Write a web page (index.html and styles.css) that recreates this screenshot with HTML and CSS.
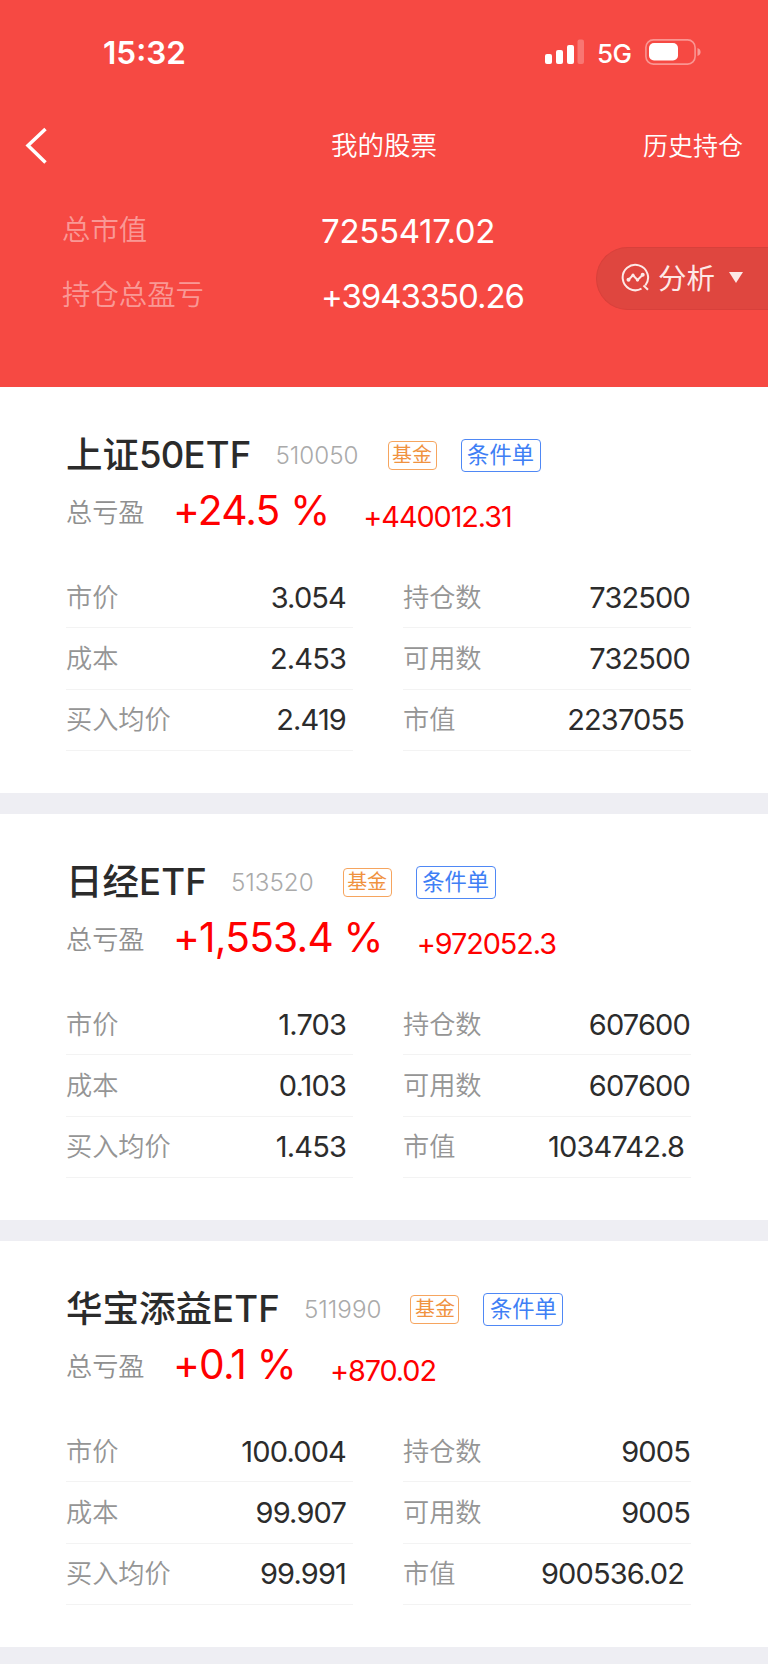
FILE: index.html
```html
<!DOCTYPE html>
<html lang="zh-CN">
	<head>
		<meta charset="UTF-8">
		<title>我的股票</title>
		<link rel="stylesheet" href="styles.css">
	</head>
	<body>

		<header>
			<div class="status">
				<span class="time">15:32</span>
				<svg class="signal" width="40" height="26" viewBox="0 0 40 26">
					<rect x="0" y="15" width="7" height="10" rx="2"/>
					<rect x="11" y="11" width="7" height="14" rx="2"/>
					<rect x="22" y="6" width="7" height="19" rx="2"/>
					<rect x="32.500" y="0.500" width="6.500" height="24.500" rx="2" opacity=".25"/>
				</svg>
				<span class="net">5G</span>
				<svg class="battery" width="56" height="26" viewBox="0 0 56 26">
					<rect x="0.900" y="0.900" width="49.200" height="24.200" rx="7.500" fill="none" stroke="#fff" stroke-width="1.600" opacity=".42"/>
					<rect x="4" y="4" width="29" height="17.500" rx="5"/>
					<path d="M52.500 9 Q55.600 10.200 55.600 13 Q55.600 15.800 52.500 17 Z" opacity=".45"/>
				</svg>
			</div>
			<nav>
				<svg class="back" width="23" height="38" viewBox="0 0 23 38">
					<path d="M20.500 2 L3 18.500 L20.500 35.500" fill="none" stroke="#fff" stroke-width="3.500"/>
				</svg>
				<h1>我的股票</h1>
				<a class="history">历史持仓</a>
			</nav>
			<ul class="total">
				<li><label>总市值</label><b>7255417.02</b></li>
				<li><label>持仓总盈亏</label><b class="profit">+3943350.26</b></li>
			</ul>
			<div class="analyse">
				<svg width="29" height="29" viewBox="0 0 29 29" fill="none" stroke="#fde9e7" stroke-width="2">
					<path d="M20.500 25.700 A12.700 12.700 0 1 1 24.300 22.500"/>
					<path d="M22.500 22.500 L27 26.800"/>
					<path d="M7.500 16.800 L12 12.200 L16.500 17 L21.500 12"/>
					<g fill="#fde9e7" stroke="none">
						<circle cx="7.500" cy="16.800" r="2"/>
						<circle cx="12" cy="12.200" r="1.600"/>
						<circle cx="16.500" cy="17" r="1.600"/>
						<circle cx="21.700" cy="11.800" r="2"/>
					</g>
				</svg>
				<span>分析</span>
				<i></i>
			</div>
		</header>

		<section class="card">
			<div class="name">
				<h2>上证<em class="num">50</em><em>ETF</em></h2>
				<span class="code">510050</span>
				<span class="fund">基金</span>
				<span class="cond">条件单</span>
			</div>
			<div class="gain">
				<label>总亏盈</label>
				<strong>+24.5 %</strong>
				<span>+440012.31</span>
			</div>
			<div class="detail">
				<ul>
					<li><label>市价</label><b>3.054</b></li>
					<li><label>成本</label><b>2.453</b></li>
					<li><label>买入均价</label><b>2.419</b></li>
				</ul>
				<ul class="right">
					<li><label>持仓数</label><b>732500</b></li>
					<li><label>可用数</label><b>732500</b></li>
					<li><label>市值</label><b>2237055</b></li>
				</ul>
			</div>
		</section>

		<section class="card">
			<div class="name">
				<h2>日经<em>ETF</em></h2>
				<span class="code">513520</span>
				<span class="fund">基金</span>
				<span class="cond">条件单</span>
			</div>
			<div class="gain">
				<label>总亏盈</label>
				<strong>+1,553.4 %</strong>
				<span>+972052.3</span>
			</div>
			<div class="detail">
				<ul>
					<li><label>市价</label><b>1.703</b></li>
					<li><label>成本</label><b>0.103</b></li>
					<li><label>买入均价</label><b>1.453</b></li>
				</ul>
				<ul class="right">
					<li><label>持仓数</label><b>607600</b></li>
					<li><label>可用数</label><b>607600</b></li>
					<li><label>市值</label><b>1034742.8</b></li>
				</ul>
			</div>
		</section>

		<section class="card last">
			<div class="name">
				<h2>华宝添益<em>ETF</em></h2>
				<span class="code">511990</span>
				<span class="fund">基金</span>
				<span class="cond">条件单</span>
			</div>
			<div class="gain">
				<label>总亏盈</label>
				<strong>+0.1 %</strong>
				<span>+870.02</span>
			</div>
			<div class="detail">
				<ul>
					<li><label>市价</label><b>100.004</b></li>
					<li><label>成本</label><b>99.907</b></li>
					<li><label>买入均价</label><b>99.991</b></li>
				</ul>
				<ul class="right">
					<li><label>持仓数</label><b>9005</b></li>
					<li><label>可用数</label><b>9005</b></li>
					<li><label>市值</label><b>900536.02</b></li>
				</ul>
			</div>
		</section>

	</body>
</html>
```

FILE: styles.css
```css
* {
	margin: 0;
	padding: 0;
	list-style: none;
	box-sizing: border-box;
}

body {
	width: 768px;
	background: #fff;
	font-family: Inter, "Noto Sans CJK SC", sans-serif;
	font-weight: 400;
}

h1, h2, b, strong, em, i {
	font-weight: inherit;
	font-style: normal;
}

label {
	font-family: "Noto Sans CJK SC", sans-serif;
	font-weight: 350;
}

/* header */
header {
	position: relative;
	height: 387px;
	background: #f64943;
	color: #fff;
}

.status {
	display: flex;
	align-items: center;
	height: 104px;
	padding: 0 67px 0 103px;
}

.status svg {
	fill: #fff;
}

.time {
	flex: 1;
	padding-top: 2px;
	font-size: 31.5px;
	font-weight: 600;
	line-height: 40px;
}

.net {
	width: 35px;
	margin: 2px 13px 0 12px;
	font-size: 26px;
	font-weight: 500;
	letter-spacing: -0.5px;
}

nav {
	display: grid;
	grid-template-columns: 1fr 110px 1fr;
	align-items: center;
	height: 84px;
	padding: 0 25px;
	font-weight: 350;
}

h1 {
	padding-bottom: 5px;
	font-size: 26.5px;
	text-align: center;
	white-space: nowrap;
}

.history {
	padding-bottom: 4px;
	font-size: 25px;
	text-align: right;
}

.total {
	padding: 10px 0 0 62px;
}

.total li {
	display: flex;
	align-items: center;
	height: 65.5px;
}

.total label {
	width: 259px;
	font-size: 28.4px;
	line-height: 40px;
	padding-bottom: 6px;
	color: rgba(255, 255, 255, .45);
}

.total b {
	font-size: 33px;
	letter-spacing: -0.3px;
}

.total .profit {
	letter-spacing: -1.05px;
}

.analyse {
	position: absolute;
	right: 0;
	top: 247px;
	display: flex;
	align-items: center;
	width: 172px;
	height: 63px;
	padding-left: 24px;
	border: 1px solid #d8403b;
	border-right: 0;
	border-radius: 32px 0 0 32px;
	background: #df463f;
	color: #fde9e7;
	font-size: 28.5px;
}

.analyse span {
	margin: 0 14px 0 8px;
	padding-bottom: 4px;
}

.analyse svg, .analyse i {
	margin-bottom: 2px;
}

.analyse i {
	border: 7px solid transparent;
	border-top: 11px solid #fde9e7;
	border-bottom: 0;
}

/* stock card */
.card {
	height: 427px;
	padding: 42px 67px 0 66px;
	border-bottom: 21px solid #eeeef3;
}

.card.last {
	height: 423px;
	border-bottom-width: 17px;
}

.name {
	display: flex;
	align-items: center;
	height: 53px;
}

h2 {
	padding-bottom: 1px;
	font-size: 36.5px;
	font-weight: 500;
	line-height: 50px;
	color: #2b2b2b;
}

h2 em {
	font-size: 36.5px;
	letter-spacing: 0.2px;
}

h2 .num {
	letter-spacing: -0.8px;
}

.code {
	margin: 0 29px 0 24px;
	font-size: 24.2px;
	font-weight: 300;
	color: #aaa;
}

.fund {
	width: 49px;
	height: 29px;
	margin-right: 24px;
	border: 1px solid #f6a55f;
	border-radius: 4px;
	font-size: 20px;
	line-height: 26px;
	text-align: center;
	color: #f0923f;
}

.cond {
	width: 80px;
	height: 33px;
	border: 1px solid #4f88f5;
	border-radius: 4px;
	font-size: 22.3px;
	line-height: 30px;
	text-align: center;
	color: #3f7ff5;
}

.gain {
	display: flex;
	align-items: center;
	height: 85px;
	padding-bottom: 28px;
	color: #f00;
}

.gain label {
	width: 107px;
	font-size: 26.2px;
	line-height: 56px;
	color: #8f8f8f;
}

.gain strong {
	margin-right: 34px;
	font-size: 40.7px;
	letter-spacing: -0.8px;
}

.gain span {
	padding-top: 11px;
	font-size: 28.8px;
	letter-spacing: -1.05px;
}

.detail {
	display: grid;
	grid-template-columns: 287px 288px;
	column-gap: 50px;
}

.detail li {
	display: flex;
	justify-content: space-between;
	align-items: center;
	height: 61.3px;
	padding-right: 7px;
	border-bottom: 1px solid #f3f3f3;
}

.detail label {
	padding-bottom: 3px;
	font-size: 26.2px;
	color: #959595;
}

.detail b {
	font-size: 29px;
	letter-spacing: -0.85px;
	color: #2c2c2c;
}

.right li {
	padding-right: 1px;
}

.right li:last-child {
	padding-right: 7px;
}
```
